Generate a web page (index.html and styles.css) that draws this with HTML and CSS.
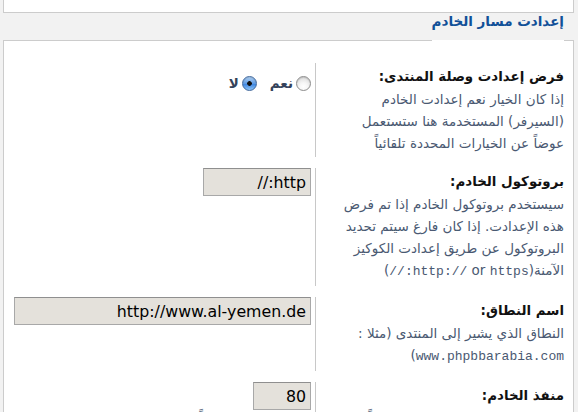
FILE: index.html
```html
<!DOCTYPE html>
<html lang="ar" dir="rtl">
<head>
<meta charset="utf-8">
<title>إعدادت مسار الخادم</title>
<link rel="stylesheet" href="styles.css">
</head>
<body>
<div class="page">
  <div class="prev-panel"></div>
  <fieldset class="panel">
    <legend class="panel-title">إعدادت مسار الخادم</legend>

    <div class="row row-1">
      <div class="term">
        <label class="term-label">فرض إعدادت وصلة المنتدى:</label>
        <span class="explain">إذا كان الخيار نعم إعدادت الخادم<br>(السيرفر) المستخدمة هنا ستستعمل<br>عوضاً عن الخيارات المحددة تلقائياً</span>
      </div>
      <div class="field">
        <div class="radio-group">
          <label class="opt"><input class="radio" type="radio" name="force_server_vars"> نعم</label>
          <label class="opt"><input class="radio" type="radio" name="force_server_vars" checked> لا</label>
        </div>
      </div>
    </div>

    <div class="row row-2">
      <div class="term">
        <label class="term-label">بروتوكول الخادم:</label>
        <span class="explain">سيستخدم بروتوكول الخادم إذا تم فرض<br>هذه الإعدادت. إذا كان فارغ سيتم تحديد<br>البروتوكول عن طريق إعدادت الكوكيز<br>الآمنة(<samp>http://</samp> or <samp>https://</samp>)</span>
      </div>
      <div class="field">
        <input class="text-input input-protocol" type="text" value="http://">
      </div>
    </div>

    <div class="row row-3">
      <div class="term">
        <label class="term-label">اسم النطاق:</label>
        <span class="explain">النطاق الذي يشير إلى المنتدى (مثلا :<br><samp>www.phpbbarabia.com</samp>)</span>
      </div>
      <div class="field">
        <input class="text-input input-domain" type="text" value="http://www.al-yemen.de">
      </div>
    </div>

    <div class="row row-4">
      <div class="term">
        <label class="term-label">منفذ الخادم:</label>
        <span class="explain">المنفذ الذي يعمل عليه الخادم، غالباً 80، لا تغيره إلا إذا كان مختلفاً</span>
      </div>
      <div class="field">
        <input class="text-input input-port" type="text" value="80">
      </div>
    </div>
  </fieldset>
</div>
</body>
</html>
```
FILE: styles.css
```css
html, body {
  margin: 0;
  padding: 0;
}

body {
  background: #f2f2f2;
  font-family: "DejaVu Sans", sans-serif;
  font-size: 13.5px;
  color: #000;
}

.page {
  padding-left: 3px;
  padding-right: 4px;
}

.prev-panel {
  height: 12px;
  background: #fff;
  border: 1px solid #cccccc;
  border-top: none;
}

.panel {
  margin: 18px 0 0 0;
  padding: 14px 9px 10px 10px;
  background: #fff;
  border: 1px solid #cccccc;
  min-width: 0;
}

.panel-title {
  padding: 0;
  font-size: 13.5px;
  font-weight: bold;
  line-height: 18px;
  color: #115098;
  position: relative;
  top: -19px;
}

.row {
  display: flex;
  gap: 4px;
  margin-bottom: 11px;
}

.term {
  width: 249px;
  flex: none;
  box-sizing: border-box;
  border-left: 1px solid #c8c8c8;
  padding: 3px 0 3px 1px;
  line-height: 22px;
  white-space: nowrap;
}

.term-label {
  display: block;
  font-weight: bold;
  font-size: 13.4px;
  color: #111;
}

.explain {
  display: block;
  color: #4a5972;
}

samp {
  font-family: "Liberation Mono", monospace;
  font-size: 13px;
}

.field {
  flex: 1;
  min-width: 0;
}

.radio-group {
  display: flex;
  align-items: center;
  gap: 13px;
  padding-top: 11px;
  line-height: 18px;
}

.opt {
  display: flex;
  align-items: center;
  gap: 3px;
  font-weight: bold;
  color: #34425a;
}

.radio {
  -webkit-appearance: none;
  appearance: none;
  width: 15px;
  height: 15px;
  margin: 0;
  border-radius: 50%;
  border: 1px solid #8c8c8c;
  background: radial-gradient(circle at 50% 75%, #ffffff 0, #f6f6f6 35%, #d2d2d2 100%);
  box-shadow: inset 0 1px 1px rgba(0, 0, 0, 0.12);
}

.radio:checked {
  border-color: #41689c;
  background:
    radial-gradient(circle at 50% 50%, #111 0, #111 2px, transparent 2.6px),
    linear-gradient(#b4d4f6 0%, #5e9ae2 50%, #3f86e0 55%, #8ec4f7 100%);
}

.text-input {
  display: block;
  box-sizing: border-box;
  height: 28px;
  margin: 0;
  padding: 0 4px;
  border: 1px solid #a8a8a8;
  border-top-color: #8f8f8f;
  background: #e4e1db;
  font-family: "DejaVu Sans", sans-serif;
  font-size: 15.8px;
  color: #000;
  direction: rtl;
  text-align: right;
}

.input-protocol {
  width: 108px;
}

.input-domain {
  width: 297px;
}

.input-port {
  width: 58px;
}
```
